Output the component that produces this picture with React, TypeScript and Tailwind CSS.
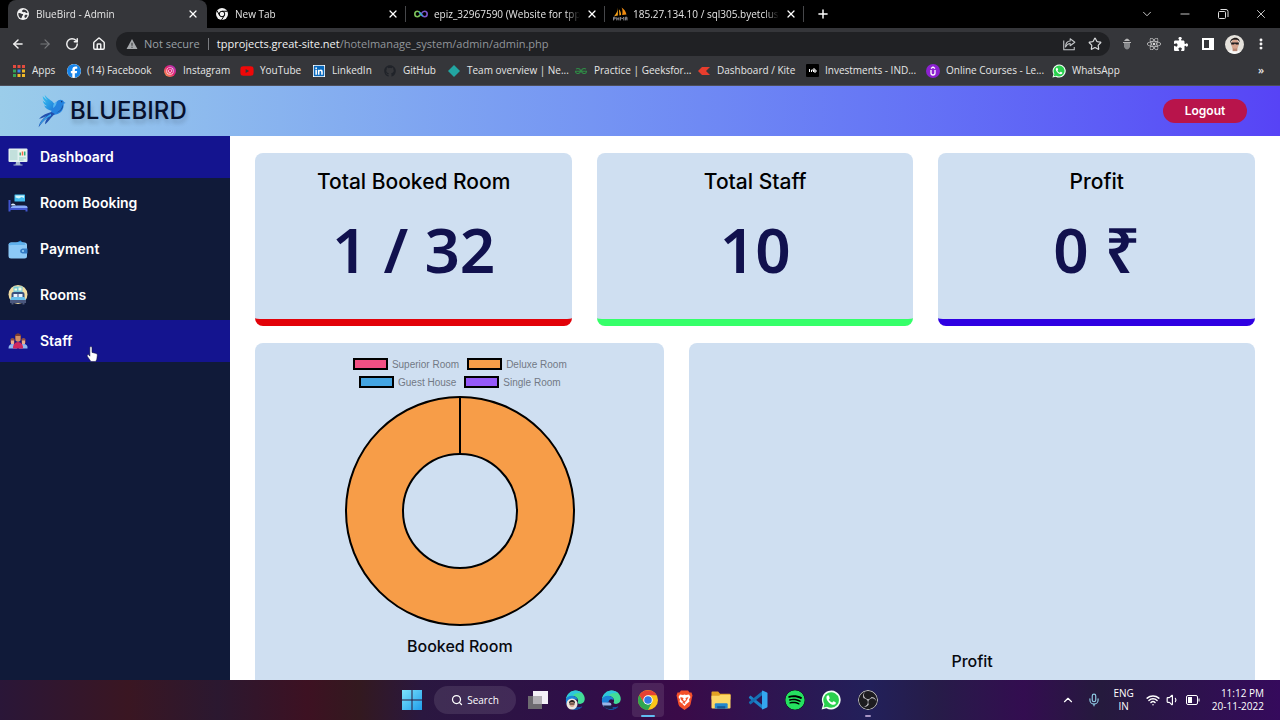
import type { ReactNode } from "react";
import { ArrowLeft, ArrowRight, ChevronDown, ChevronUp, House, Mic, Minus, MoreVertical, Plus, RotateCw, Search, Star, Volume1, Wifi, X } from "lucide-react";
import { FaFacebook, FaGithub, FaInstagram, FaLinkedin, FaPuzzlePiece, FaReact, FaSpotify, FaYoutube } from "react-icons/fa6";
import { SiGeeksforgeeks, SiObsstudio } from "react-icons/si";

/* ---------- small drawings ---------- */

function GlobeIcon() {
  return (
    <svg viewBox="0 0 24 24" className="size-3 shrink-0">
      <circle cx="12" cy="12" r="12" fill="#f1f1f1" />
      <path d="M3 10c4-1 5 2 9 2 1 3-2 3-2 5s-1 3-2 4C4 19 2 15 3 10zM13 3c-2 2-4 2-3 4 2 1 3 2 5 1s2 3 6 2c0-4-4-7-8-7zM16 14c2-1 4 0 5 0-1 4-3 6-5 6-1-2-2-4 0-6z" fill="#35363a" />
    </svg>
  );
}

function ChromeMono() {
  return (
    <svg viewBox="0 0 24 24" className="size-3 shrink-0">
      <circle cx="12" cy="12" r="12" fill="#f1f1f1" />
      <circle cx="12" cy="12" r="5.5" fill="none" stroke="#000" strokeWidth="2" />
      <path d="M12 6.500h11M7.300 14.800L2 5.500M16.700 14.800L11 24" stroke="#000" strokeWidth="2" />
    </svg>
  );
}

function InfinityIcon() {
  return (
    <svg viewBox="0 0 26 14" className="h-2 w-3.5 shrink-0">
      <path d="M13 7C10 3 8.500 2 6.500 2a5 5 0 000 10c2 0 3.500-1 6.500-5" fill="none" stroke="#7fc45c" strokeWidth="3" />
      <path d="M13 7c3-4 4.500-5 6.500-5a5 5 0 010 10c-2 0-3.500-1-6.500-5" fill="none" stroke="#7a55c9" strokeWidth="3" />
      <path d="M9.500 3.500C11 4.500 14 9 16 10.800" fill="none" stroke="#38a3d8" strokeWidth="3" />
    </svg>
  );
}

function PhpMyAdminIcon() {
  return (
    <svg viewBox="0 0 28 26" className="h-3.5 w-4 shrink-0">
      <path d="M10 1c0 6-3 12-7 16l7-1zM12 4l1 12 3-1c0-4-1-8-4-11z" fill="#f6a21b" />
      <path d="M17 1c2 4 2 9 1 14l8-1C25 9 22 4 17 1z" fill="#ef8b10" />
      <path d="M2 25v-6h3v3H2M8 25v-6M12 25v-6M8 22h4M15 25v-6l3 3 3-3v6M24 25v-6h3v6M24 22h3" fill="none" stroke="#a5a5ad" strokeWidth="1.500" />
    </svg>
  );
}

function WhatsAppIcon({ className }: { className: string }) {
  return (
    <svg viewBox="0 0 32 32" className={className}>
      <path d="M1 31l2.300-7.800A15 15 0 1116 31a15 15 0 01-7.400-2z" fill="#f2fff5" />
      <path d="M4 28l1.500-5.500A12.500 12.500 0 1116 28.500c-2.200 0-4.500-.6-6.300-1.700z" fill="#2ad04e" />
      <path d="M11.500 8.500c-1 0-2.800 1.300-2.800 3.700 0 5 6.700 11.300 11.300 11.300 2.500 0 3.800-1.800 3.800-3.300 0-.8-3.300-2.400-4-2.400s-1.500 2.200-2.200 2.200c-1 0-5.200-3.500-5.200-4.700 0-.7 1.500-1.300 1.500-2.200S12.700 8.500 11.500 8.500z" fill="#fff" />
    </svg>
  );
}

function ShareIcon() {
  return (
    <svg viewBox="0 0 24 24" className="size-3.5" fill="none" stroke="#c4c7ca" strokeWidth="1.8" strokeLinejoin="round">
      <path d="M3 6v16h18v-5" />
      <path d="M14 3l8 6-8 6v-4c-4 0-6 2-8 6 0-6 3-10 8-10z" />
    </svg>
  );
}

function Avatar({ className }: { className: string }) {
  return (
    <svg viewBox="0 0 20 20" className={className}>
      <clipPath id="face"><circle cx="10" cy="10" r="10" /></clipPath>
      <g clipPath="url(#face)">
        <rect width="20" height="20" fill="#e5e2dc" />
        <path d="M3 20c1-4 4-5 7-5s6 1 7 5z" fill="#f7f7f7" />
        <rect x="8" y="12" width="5" height="5" fill="#b98672" />
        <ellipse cx="10.500" cy="9.500" rx="4" ry="5" fill="#d6a48e" />
        <path d="M5.500 9C4 2 16 0 15.500 8c-1-3-3-3-5-3s-4 0-5 4z" fill="#241d1c" />
        <path d="M6.500 8h8v2h-3l-1-1-1 1h-3z" fill="#1b1b1f" />
      </g>
    </svg>
  );
}

function BirdLogo() {
  return (
    <svg viewBox="0 0 84 104" className="h-9 w-7">
      <defs>
        <linearGradient id="wing" x1="0" y1="0" x2="1" y2="1">
          <stop offset="0" stopColor="#35c5f3" />
          <stop offset="1" stopColor="#1f78d8" />
        </linearGradient>
      </defs>
      <path d="M20 3c1 8 5 12 9 16-7-3-12-8-15-12 0 9 5 15 11 20-5-1-9-4-11-7 1 9 7 15 13 18-4 0-7-1-9-3 4 10 13 14 22 16 6-2 12-9 11-15C49 22 28 16 20 3z" fill="url(#wing)" />
      <path d="M42 47c4-12 10-21 19-27 6-4 14-2 17 5l5 3-6 2c1 15-6 26-18 31-8 3-17 2-22 0z" fill="#2583df" />
      <path d="M56 24c0 8-5 15-11 19l1-9c2-5 5-8 10-10z" fill="#54b7f1" />
      <path d="M74 33c-3 12-8 19-19 24 10-2 17-8 20-17z" fill="#1d4f9f" />
      <circle cx="71" cy="24" r="2" fill="#123063" />
      <path d="M40 55C29 58 13 64 3 75c10-2 16-5 23-9C17 74 4 83 2 101c8-12 16-21 27-29-5 7-8 13-8 20 12-9 16-20 30-31z" fill="#2050ae" />
      <path d="M39 60C25 68 9 79 3 97c10-15 21-23 36-31z" fill="#37a6ec" />
    </svg>
  );
}

function WindowsIcon() {
  return (
    <svg viewBox="0 0 20 20" className="size-5">
      <defs>
        <linearGradient id="win" x1="0" y1="0" x2="1" y2="1">
          <stop offset="0" stopColor="#7de4fb" />
          <stop offset="1" stopColor="#1f9deb" />
        </linearGradient>
      </defs>
      <path d="M0 0h9.500v9.500H0zM10.500 0H20v9.500h-9.500zM0 10.500h9.500V20H0zM10.500 10.500H20V20h-9.500z" fill="url(#win)" />
    </svg>
  );
}

function TaskViewIcon() {
  return (
    <svg viewBox="0 0 20 20" className="size-5">
      <rect x="5" y="1" width="15" height="13" fill="#f3f0f7" />
      <rect x="0" y="6" width="14" height="13" fill="#6d6a70" />
      <rect x="5" y="6" width="9" height="8" fill="#b2afb5" />
    </svg>
  );
}

function EdgeIcon({ children }: { children?: ReactNode }) {
  return (
    <svg viewBox="0 0 40 40" className="size-5">
      <path d="M2 18C4 8 12 1 21 1c11 0 19 8 18.500 17.500C39 27 30 30 25 26c2-3 2-10-5-13C13 11 6 13 2 18z" fill="#43dc97" />
      <path d="M2 18C4 8 12 1 21 1c5 0 10 2 13 5-10-1-17 1-18 6-6 0-11 2-14 6z" fill="#2ec7dc" />
      <path d="M2 18c4-6 12-8 18-5 3 1 5 4 5 7-6-4-11 0-10 7s9 11 19 6C28 41 14 42 7 34 3 30 1 24 2 18z" fill="#1b83d8" />
      <path d="M15 24c-1 9 8 14 20 9-7 8-19 8-24 2-4-6-1-11 4-11z" fill="#154a9c" />
      {children}
    </svg>
  );
}

function ChromeIcon() {
  return (
    <svg viewBox="0 0 40 40" className="size-5">
      <circle cx="20" cy="20" r="20" fill="#fbc418" />
      <path d="M2.700 10A20 20 0 0020 40l8.200-15.500-16.400 0z" fill="#2fa650" />
      <path d="M2.700 10A20 20 0 0137.300 10.500L20 10.500 11.500 24.500z" fill="#e64234" />
      <circle cx="20" cy="20" r="9.500" fill="#fff" />
      <circle cx="20" cy="20" r="7.500" fill="#3478e5" />
    </svg>
  );
}

function BraveIcon() {
  return (
    <svg viewBox="0 0 34 40" className="h-5 w-[17px]">
      <path d="M10 1h14l3 4 4 0 2 6-1 4-3 14q-1 4-5 6l-7 5-7-5q-4-2-5-6L2 15l-1-4 2-6h4z" fill="#f4502a" />
      <path d="M8 9l6 1 3-1 3 1 6-1 3 5-3 5 1 4-5 4-5 5-5-5-5-4 1-4-3-5z" fill="#fff" />
      <path d="M9 14l6 2-1 4 3 2 3-2-1-4 6-2-2 4-3 5-3 1 2 2-2 2-2-2-2 2 0-3 2-1-3-2-3-4z" fill="#f4502a" />
    </svg>
  );
}

function FolderIcon() {
  return (
    <svg viewBox="0 0 42 38" className="size-5">
      <path d="M1 3q0-2 2-2h12l4 5h20q2 0 2 2v10H1z" fill="#e2a224" />
      <path d="M1 10h16l3-2h21v27q0 2-2 2H3q-2 0-2-2z" fill="#fcd868" />
      <path d="M8 28q0-2 2-2h23q2 0 2 2v9H8z" fill="#2387cd" />
      <path d="M13 32h17v5H13z" fill="#125995" />
    </svg>
  );
}

function CodeIcon() {
  return (
    <svg viewBox="0 0 40 40" className="size-5">
      <path d="M2 14l3-3 25 20v8L3 17q-2-2-1-3z" fill="#1c82c8" />
      <path d="M2 26l3 3 25-20V1L3 23q-2 2-1 3z" fill="#1470b3" />
      <path d="M29 1l9 4q1 1 1 2v26q0 1-1 2l-9 4q-1-1-1-2V3q0-1 1-2z" fill="#34a6ef" />
    </svg>
  );
}

function HandCursor() {
  return (
    <svg viewBox="0 0 22 30" className="absolute top-[26px] left-[86px] h-4 w-3">
      <path d="M7 2q2-2 4 0v10l8 2q2 1 2 3l-1 8-2 4H9L2 19q-1-3 2-3l3 3z" fill="#fff" stroke="#15153a" strokeWidth="1" />
    </svg>
  );
}

/* ---------- sidebar pictures ---------- */

function DashboardIcon() {
  return (
    <svg viewBox="0 0 40 36" className="h-[18px] w-5">
      <rect x="1" y="1" width="38" height="27" rx="2" fill="#e3f1f0" />
      <rect x="4" y="4" width="15" height="20" fill="#c3e0dc" />
      <rect x="22" y="4" width="14" height="12" fill="#f7f4e8" />
      <path d="M23 15V9h3v6zM32 15V7h3v8z" fill="#2db184" />
      <path d="M27.500 15V7h3v8z" fill="#f06b48" />
      <path d="M22 19h14v2H22zM22 23h9v2h-9z" fill="#97d3c5" />
      <path d="M16 28h8l1 5h4v2H11v-2h4z" fill="#aabbd0" />
    </svg>
  );
}

function BookingIcon() {
  return (
    <svg viewBox="0 0 40 36" className="h-[18px] w-5">
      <rect x="13" y="1" width="21" height="14" rx="1" fill="#42bdf1" />
      <path d="M15 3h17v5l-5-2-5 3-7-2z" fill="#d5f6fa" />
      <path d="M1 12h4v15h34v8h-4v-3H5v3H1z" fill="#4054cf" />
      <path d="M6 21q5-5 10 2h-9z" fill="#dcebff" />
      <path d="M6 26q2-3 12-3h15q6 0 6 4v1H6z" fill="#87a9fa" />
    </svg>
  );
}

function WalletIcon() {
  return (
    <svg viewBox="0 0 40 38" className="h-[19px] w-5">
      <path d="M12 8L25 1l8 8z" fill="#2589d7" />
      <rect x="1" y="5" width="37" height="32" rx="5" fill="#8cc9f7" />
      <path d="M1 9q1-4 6-4h23q5 0 5 5H7q-4 1-6-1z" fill="#5fb0ec" />
      <path d="M29 17h10v10H29q-5-1-5-5t5-5z" fill="#347cc5" />
      <circle cx="30" cy="22" r="2" fill="#9ed6fa" />
    </svg>
  );
}

function RoomsIcon() {
  return (
    <svg viewBox="0 0 40 40" className="size-5">
      <circle cx="20" cy="19" r="19" fill="#f2dda2" />
      <path d="M11 3h18v11H11z" fill="#79cad8" />
      <path d="M13 7h5v4h-5zM21 5h6v6h-6z" fill="#f6fbdf" />
      <path d="M7 18q0-4 4-4h18q4 0 4 4v8H7z" fill="#37507f" />
      <path d="M11 18h8v6h-8zM21 18h8v6h-8z" fill="#e9f3ff" />
      <path d="M7 24h26l3 7H4z" fill="#69c1ec" />
      <path d="M4 30h32v6h-3v3h-4v-3H11v3H7v-3H4z" fill="#4b577d" />
    </svg>
  );
}

function StaffIcon() {
  return (
    <svg viewBox="0 0 40 32" className="h-4 w-5">
      <path d="M5 12q4-4 8 0v8H5zM27 12q4-4 8 0v8h-8z" fill="#925044" />
      <path d="M6 15h6v7H6zM28 15h6v7h-6z" fill="#edaf8d" />
      <path d="M1 31q0-9 8-9t9 9zM22 31q0-9 9-9t8 9z" fill="#92b8ee" />
      <path d="M14 4q6-7 12 0v9H14z" fill="#7c3d32" />
      <path d="M15 6h10v9q-5 5-10 0z" fill="#d38e66" />
      <path d="M10 31q0-13 10-13t10 13z" fill="#cf285f" />
    </svg>
  );
}

/* ---------- browser window ---------- */

const tabs = [
  { title: "BlueBird - Admin", icon: <GlobeIcon />, active: true },
  { title: "New Tab", icon: <ChromeMono />, active: false },
  { title: "epiz_32967590 (Website for tppr", icon: <InfinityIcon />, active: false },
  { title: "185.27.134.10 / sql305.byetcluste", icon: <PhpMyAdminIcon />, active: false },
];

function TabStrip() {
  return (
    <div className="flex h-7 items-stretch bg-black pl-2 text-[10px] text-[#e4e4e4]">
      {tabs.map((tab) => (
        <div
          key={tab.title}
          className={tab.active ? "flex w-[199px] items-center gap-1.5 rounded-t-lg bg-[#35363a] pr-2 pl-2" : "flex w-[199px] items-center gap-1.5 pl-2"}
        >
          <span className="flex w-3.5 shrink-0 justify-center">{tab.icon}</span>
          <span className="min-w-0 flex-1 mask-r-from-90% whitespace-nowrap">{tab.title}</span>
          <button aria-label="Close tab" className={tab.active ? "" : "flex h-4 items-center border-r border-[#46474a] pr-1.5"}>
            <X className="size-3 text-white" strokeWidth={2.5} />
          </button>
        </div>
      ))}
      <button aria-label="New tab" className="ml-3">
        <Plus className="size-3.5 text-white" strokeWidth={2.5} />
      </button>
      <div className="ml-auto flex items-center gap-6 pr-3 text-[#e0e0e0]">
        <button aria-label="Search tabs"><ChevronDown className="size-3.5" strokeWidth={1.5} /></button>
        <button aria-label="Minimize"><Minus className="size-3.5" strokeWidth={1.5} /></button>
        <button aria-label="Restore">
          <svg viewBox="0 0 14 14" className="size-3.5" fill="none" stroke="currentColor">
            <rect x="2.500" y="4.500" width="7" height="7" rx="1" />
            <path d="M4.500 2.500h5.500a2 2 0 012 2V10" />
          </svg>
        </button>
        <button aria-label="Close"><X className="size-3.5" strokeWidth={1.5} /></button>
      </div>
    </div>
  );
}

function AddressBar() {
  return (
    <div className="flex h-8 items-center gap-2.5 bg-[#35363a] pr-3 pl-[11px] text-[#f1f1f1]">
      <div className="flex items-center gap-[13px]">
        <button aria-label="Back"><ArrowLeft className="size-3.5" strokeWidth={2.5} /></button>
        <button aria-label="Forward"><ArrowRight className="size-3.5 text-[#77787b]" strokeWidth={2} /></button>
        <button aria-label="Reload"><RotateCw className="size-3.5" strokeWidth={2.5} /></button>
        <button aria-label="Home"><House className="size-3.5" strokeWidth={2.5} /></button>
      </div>
      <div className="flex h-6 flex-1 items-center rounded-full bg-[#202124] pr-2 pl-2.5 text-[11px]">
        <svg viewBox="0 0 24 22" className="h-2.5 w-3">
          <path d="M12 0l12 22H0z" fill="#a5a8ab" />
          <path d="M11 8h2v7h-2zM11 17h2v2h-2z" fill="#202124" />
        </svg>
        <span className="ml-1.5 text-[#9aa0a6]">Not secure</span>
        <span className="mx-2 h-3 w-px bg-[#7a7c80]" />
        <span className="flex-1 text-[#92969b]">
          <span className="text-[#f1f1f1]">tpprojects.great-site.net</span>/hotelmanage_system/admin/admin.php
        </span>
        <button aria-label="Share"><ShareIcon /></button>
        <button aria-label="Bookmark" className="ml-3"><Star className="size-3.5 text-[#d9dbdd]" /></button>
      </div>
      <div className="flex items-center gap-[13px]">
        <svg viewBox="0 0 14 14" className="size-3.5">
          <path d="M4 6h6v4q-3 5-6 0z" fill="#85878a" />
          <path d="M4 4q3-5 6 0zM3 5h8v1H3z" fill="#b7b7b7" />
        </svg>
        <FaReact className="size-3.5 text-[#d9d9d9]" />
        <FaPuzzlePiece className="size-3.5 text-white" />
        <svg viewBox="0 0 14 14" className="size-3.5">
          <rect x="2" y="2" width="10" height="10" fill="none" stroke="#fff" strokeWidth="2" />
          <path d="M8 2h4v10H8z" fill="#fff" />
        </svg>
      </div>
      <Avatar className="size-[19px]" />
      <button aria-label="Menu"><MoreVertical className="size-3.5 text-white" strokeWidth={3} /></button>
    </div>
  );
}

const appDots = ["#e34b3e", "#e34b3e", "#e34b3e", "#36a657", "#3d85ed", "#f0b928", "#36a657", "#f0b928", "#f0b928"];

const bookmarks = [
  {
    label: "Apps",
    width: "w-[55px]",
    icon: (
      <svg viewBox="0 0 12 12" className="size-3">
        {appDots.map((color, i) => (
          <rect key={i} x={(i % 3) * 4.5} y={Math.floor(i / 3) * 4.5} width="3" height="3" fill={color} />
        ))}
      </svg>
    ),
  },
  { label: "(14) Facebook", width: "w-24", icon: <FaFacebook className="size-3.5 rounded-full bg-white text-[#1583e9]" /> },
  {
    label: "Instagram",
    width: "w-[77px]",
    icon: <FaInstagram className="size-3 rounded-full bg-linear-to-tr from-[#fca12b] via-[#e41d70] to-[#a326c9] p-0.5 text-white" />,
  },
  { label: "YouTube", width: "w-[72px]", icon: <FaYoutube className="size-3.5 text-[#f00808]" /> },
  { label: "LinkedIn", width: "w-[71px]", icon: <FaLinkedin className="size-3 bg-white text-[#0969bd]" /> },
  { label: "GitHub", width: "w-16", icon: <FaGithub className="size-3 text-[#202329]" /> },
  {
    label: "Team overview | Ne...",
    width: "w-[127px]",
    icon: <svg viewBox="0 0 12 12" className="size-3"><path d="M6 0l6 6-6 6-6-6z" fill="#22a6a2" /></svg>,
  },
  { label: "Practice | Geeksfor...", width: "w-[123px]", icon: <SiGeeksforgeeks className="size-3 text-[#2f8d46]" /> },
  {
    label: "Dashboard / Kite",
    width: "w-[108px]",
    icon: <svg viewBox="0 0 12 10" className="h-2.5 w-3"><path d="M4 1h8L8 5l4 4H4L0 5z" fill="#e83d2d" /></svg>,
  },
  {
    label: "Investments - IND...",
    width: "w-[121px]",
    icon: (
      <svg viewBox="0 0 13 13" className="size-[13px]">
        <rect width="13" height="13" rx="1" fill="#000" />
        <path d="M3.500 5v3M5.500 8V6h2v2M8 4v4h2V6H8" fill="none" stroke="#fff" />
      </svg>
    ),
  },
  {
    label: "Online Courses - Le...",
    width: "w-[126px]",
    icon: (
      <svg viewBox="0 0 14 14" className="size-3.5">
        <circle cx="7" cy="7" r="7" fill="#8c21d1" />
        <path d="M5 6v3q0 2 2 2t2-2V6M5 4.500L7 3l2 1.500" fill="none" stroke="#fff" strokeWidth="1.300" />
      </svg>
    ),
  },
  { label: "WhatsApp", width: "w-[70px]", icon: <WhatsAppIcon className="size-3.5" /> },
];

function BookmarksBar() {
  return (
    <nav className="flex h-[26px] items-center border-b border-[#4c4d58] bg-[#35363a] pb-1 pl-3 text-[10px] text-[#e6e6e6]">
      {bookmarks.map((b) => (
        <a key={b.label} href="#" className={`${b.width} flex shrink-0 items-center gap-1.5 whitespace-nowrap`}>
          <span className="flex w-3.5 shrink-0 justify-center">{b.icon}</span>
          {b.label}
        </a>
      ))}
      <button className="mr-4 ml-auto text-[11px] font-semibold">»</button>
    </nav>
  );
}

/* ---------- page ---------- */

const links = [
  { label: "Dashboard", icon: <DashboardIcon />, active: true },
  { label: "Room Booking", icon: <BookingIcon />, active: false },
  { label: "Payment", icon: <WalletIcon />, active: false },
  { label: "Rooms", icon: <RoomsIcon />, active: false },
  { label: "Staff", icon: <StaffIcon />, active: true, hovered: true },
];

function Sidebar() {
  return (
    <nav className="flex w-[18%] shrink-0 flex-col gap-1 bg-[#101a39] font-[Inter,sans-serif] text-sm font-semibold text-white">
      {links.map((link) => (
        <a
          key={link.label}
          href="#"
          className={link.active ? "relative flex h-[42px] items-center gap-3 bg-[#14148f] pl-2" : "relative flex h-[42px] items-center gap-3 pl-2"}
        >
          {link.icon}
          {link.label}
          {link.hovered && <HandCursor />}
        </a>
      ))}
    </nav>
  );
}

const stats = [
  { title: "Total Booked Room", value: "1 / 32", border: "border-[#e20209]" },
  { title: "Total Staff", value: "10", border: "border-[#35ff69]" },
  { title: "Profit", value: "0 ₹", border: "border-[#2f00e2]" },
];

const legend = [
  [
    { label: "Superior Room", color: "bg-[#f25084]" },
    { label: "Deluxe Room", color: "bg-[#f79d48]" },
  ],
  [
    { label: "Guest House", color: "bg-[#44a5e2]" },
    { label: "Single Room", color: "bg-[#9559f8]" },
  ],
];

function BookedRoomChart() {
  return (
    <section className="flex flex-col items-center rounded-t-lg bg-[#cfdff1] pt-3">
      {legend.map((row, i) => (
        <div key={i} className="flex h-[18px] items-center gap-2 font-['Liberation_Sans',sans-serif] text-[10px] text-[#727985]">
          {row.map((item) => (
            <span key={item.label} className="flex items-center gap-1">
              <span className={`${item.color} h-3 w-[35px] border-2 border-black`} />
              {item.label}
            </span>
          ))}
        </div>
      ))}
      <svg viewBox="0 0 230 230" className="mt-[5px] size-[230px]">
        <circle cx="115" cy="115" r="86" fill="none" stroke="#f79d48" strokeWidth="57" />
        <circle cx="115" cy="115" r="114" fill="none" stroke="#000" strokeWidth="2" />
        <circle cx="115" cy="115" r="57" fill="none" stroke="#000" strokeWidth="2" />
        <path d="M115 1v57" stroke="#000" strokeWidth="2" />
      </svg>
      <h3 className="mt-2 font-[Inter,sans-serif] text-base font-medium text-[#08090f]">Booked Room</h3>
    </section>
  );
}

function Dashboard() {
  return (
    <main className="flex min-w-0 flex-1 flex-col gap-[17px] bg-white px-[25px] pt-[17px]">
      <div className="grid grid-cols-3 gap-[25px]">
        {stats.map((s) => (
          <section key={s.title} className={`${s.border} flex h-[173px] flex-col items-center rounded-lg border-b-[7px] bg-[#cfdff1] pt-[13px]`}>
            <h2 className="font-[Inter,sans-serif] text-[21px] leading-8 font-medium text-black">{s.title}</h2>
            <p className="mt-2 font-['Noto_Sans',sans-serif] text-[62px] leading-[86px] font-semibold text-[#11114e]">{s.value}</p>
          </section>
        ))}
      </div>
      <div className="grid flex-1 grid-cols-[409fr_566fr] gap-[25px]">
        <BookedRoomChart />
        <section className="flex flex-col items-center justify-end rounded-t-lg bg-[#cfdff1] pb-[7px]">
          <h3 className="font-[Inter,sans-serif] text-base font-medium text-[#08090f]">Profit</h3>
        </section>
      </div>
    </main>
  );
}

/* ---------- taskbar ---------- */

const apps = [
  { name: "Task view", icon: <TaskViewIcon /> },
  {
    name: "Edge profile",
    icon: (
      <EdgeIcon>
        <circle cx="14" cy="28" r="11" fill="#ece6e0" />
        <ellipse cx="14" cy="28" rx="5" ry="6" fill="#d6a48e" />
        <path d="M8 27c-1-9 13-10 12 0-2-3-9-4-12 0zM9 27h10v2H9z" fill="#241d1c" />
      </EdgeIcon>
    ),
  },
  {
    name: "Edge",
    icon: (
      <EdgeIcon>
        <path d="M2 25h15q4 0 4 5l-4 4H6q-4-4-4-9z" fill="#9cb6e8" />
        <path d="M4 31h18l2 6q-13 4-20-6z" fill="#1b2148" />
      </EdgeIcon>
    ),
  },
  { name: "Chrome", icon: <ChromeIcon />, focused: true },
  { name: "Brave", icon: <BraveIcon /> },
  { name: "Files", icon: <FolderIcon /> },
  { name: "Code", icon: <CodeIcon /> },
  { name: "Spotify", icon: <FaSpotify className="size-5 rounded-full bg-black text-[#25e060]" /> },
  { name: "WhatsApp", icon: <WhatsAppIcon className="size-5" /> },
  { name: "OBS", icon: <SiObsstudio className="size-5 rounded-full bg-[#1d1c20] text-[#c9c7cd]" />, running: true },
];

function Taskbar() {
  return (
    <footer className="grid h-10 shrink-0 grid-cols-[1fr_auto_1fr] items-center bg-[linear-gradient(90deg,#2a1638_0%,#3a1622_10%,#2b1830_17%,#3d1122_24%,#33191f_28%,#2a1740_33%,#2f0f48_45%,#3a0a48_53%,#22205a_68%,#261c48_73%,#330d50_80%,#251a3d_86%,#350a5c_100%)] text-[10px] text-white">
      <div />
      <div className="flex items-center gap-3">
        <button aria-label="Start"><WindowsIcon /></button>
        <button className="flex h-7 w-[82px] items-center justify-center gap-1 rounded-full bg-white/10">
          <Search className="size-3" strokeWidth={2.5} />
          Search
        </button>
        <div className="flex w-[350px] justify-between">
          {apps.map((app) => (
            <button
              key={app.name}
              aria-label={app.name}
              className={
                app.focused
                  ? "relative -mx-1.5 flex h-[34px] w-8 items-center justify-center rounded-sm bg-white/10"
                  : "relative flex h-[34px] w-5 items-center justify-center"
              }
            >
              {app.icon}
              {app.focused && <span className="absolute bottom-0 h-0.5 w-3.5 rounded-full bg-[#61bdf2]" />}
              {app.running && <span className="absolute bottom-0 h-0.5 w-1.5 rounded-full bg-[#a996c4]" />}
            </button>
          ))}
        </div>
      </div>
      <div className="flex items-center justify-end gap-3 pr-4">
        <button aria-label="Hidden icons"><ChevronUp className="size-3.5" strokeWidth={2} /></button>
        <Mic className="size-3.5 text-[#8fcbe4]" strokeWidth={2} />
        <button className="text-center leading-[13px]">ENG<br />IN</button>
        <div className="flex items-center gap-1.5">
          <Wifi className="size-3.5" strokeWidth={2.5} />
          <Volume1 className="size-3.5" strokeWidth={2} />
          <svg viewBox="0 0 14 10" className="h-2.5 w-3.5" fill="none" stroke="#fff">
            <rect x="0.500" y="0.500" width="11" height="9" rx="1.500" />
            <path d="M2 2h4v6H2z" fill="#fff" stroke="none" />
            <path d="M13 3.500v3" />
          </svg>
        </div>
        <time className="text-right leading-[13px]">11:12 PM<br />20-11-2022</time>
      </div>
    </footer>
  );
}

export default function App() {
  return (
    <div className="flex h-screen flex-col overflow-hidden bg-white font-['Open_Sans',sans-serif]">
      <TabStrip />
      <AddressBar />
      <BookmarksBar />
      <header className="flex h-[50px] shrink-0 items-center bg-linear-to-r from-[#9bcdea] to-[#5743f6] pr-[33px] pl-[38px]">
        <BirdLogo />
        <h1 className="ml-1 font-[Inter,sans-serif] text-2xl font-medium text-[#07102c] text-shadow-[1px_4px_4px_#00000030]">BLUEBIRD</h1>
        <button className="ml-auto h-6 w-[84px] rounded-full bg-[#b8144b] font-[Inter,sans-serif] text-xs font-semibold text-white">Logout</button>
      </header>
      <div className="flex min-h-0 flex-1">
        <Sidebar />
        <Dashboard />
      </div>
      <Taskbar />
    </div>
  );
}
